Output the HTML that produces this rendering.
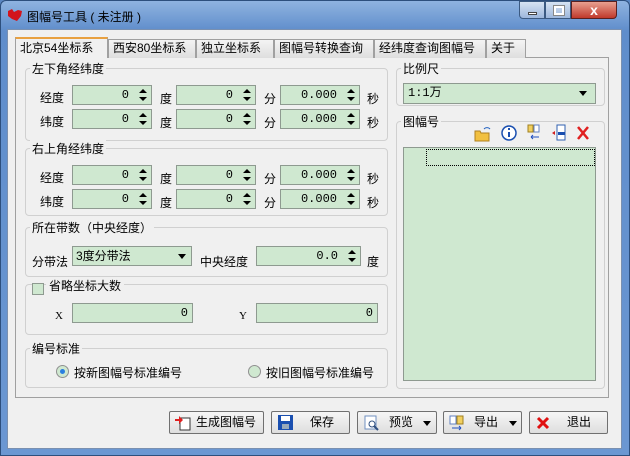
<!DOCTYPE html><html><head><meta charset="utf-8"><style>
*{box-sizing:border-box;margin:0;padding:0}
body{width:630px;height:456px;overflow:hidden;font-family:"Liberation Sans","Noto Sans CJK SC",sans-serif;font-size:12px;color:#000;background:#5a86c2;position:relative}
.a{position:absolute}
#win{left:0;top:0;width:630px;height:456px;background:linear-gradient(#8fb3e0,#5f8dcb 30px,#6b97d2);border:1px solid #2d4f7d;border-radius:6px 6px 0 0}
#client{left:7px;top:29px;width:615px;height:420px;background:#f0f0f0;border:1px solid #7a90b0}
.g{position:absolute;border:1px solid #d0d0d0;border-radius:4px}
.gl{position:absolute;background:#f0f0f0;padding:0 2px;top:-9px;left:4px;font-size:12px}
.in{position:absolute;background:#cfe8d0;border:1px solid #8e9a90;height:20px;text-align:right;padding-right:22px;line-height:18px;font-family:"Liberation Mono",monospace;font-size:12px}
.in.n{padding-right:4px}
.sp{position:absolute;right:3px;top:2px;width:10px;height:14px}
.t{position:absolute;font-size:12px}
.btn{position:absolute;top:411px;height:23px;border:1px solid #707070;border-radius:2px;background:linear-gradient(#f6f6f6,#dedede);font-size:12px;line-height:21px}
.tab{position:absolute;top:39px;height:19px;border:1px solid #a0a0a0;border-bottom:none;background:linear-gradient(#f4f4f4,#dedede);font-size:12px;line-height:17px;padding-left:4px}
</style></head><body>
<div id="win" class="a"></div>
<svg class="a" style="left:6px;top:7px" width="18" height="16"><path d="M2 4 L6 2 L8 5 L12 3 L16 4 L15 9 L11 14 L6 12 L2 9Z" fill="#d2141c"/></svg>
<div class="a" style="left:27px;top:8px;font-size:12px">图幅号工具 ( 未注册 )</div>
<div class="a" style="left:519px;top:1px;width:26px;height:18px;border:1px solid #3b5a82;border-radius:0 0 0 4px;background:linear-gradient(#d6e3f3,#9db7dc)"><div class="a" style="left:8px;top:10px;width:9px;height:3px;background:#fff;border:1px solid #444"></div></div>
<div class="a" style="left:545px;top:1px;width:26px;height:18px;border:1px solid #3b5a82;background:linear-gradient(#d6e3f3,#9db7dc)"><div class="a" style="left:8px;top:4px;width:10px;height:9px;border:2px solid #fff;outline:1px solid #888"></div></div>
<div class="a" style="left:571px;top:1px;width:46px;height:18px;border:1px solid #5a2020;border-radius:0 0 4px 0;background:linear-gradient(#e8a090,#c0392b);color:#fff;font-weight:bold;text-align:center;line-height:16px;font-size:14px">x</div>
<div id="client" class="a"></div>
<div class="a" style="left:15px;top:57px;width:594px;height:341px;border:1px solid #a0a0a0;background:#f0f0f0"></div>
<div class="tab" style="left:108px;width:88px">西安80坐标系</div>
<div class="tab" style="left:196px;width:78px">独立坐标系</div>
<div class="tab" style="left:274px;width:100px">图幅号转换查询</div>
<div class="tab" style="left:374px;width:112px">经纬度查询图幅号</div>
<div class="tab" style="left:486px;width:40px">关于</div>
<div class="tab" style="left:15px;top:37px;height:21px;width:93px;background:#f0f0f0;border-top:2px solid #e8a040;line-height:19px">北京54坐标系</div>

<div class="g" style="left:25px;top:68px;width:363px;height:73px"><span class="gl">左下角经纬度</span></div>
<div class="g" style="left:25px;top:148px;width:363px;height:68px"><span class="gl">右上角经纬度</span></div>
<div class="g" style="left:25px;top:227px;width:363px;height:50px"><span class="gl">所在带数（中央经度）</span></div>
<div class="g" style="left:25px;top:284px;width:363px;height:51px"></div>
<div class="g" style="left:25px;top:348px;width:363px;height:40px"><span class="gl">编号标准</span></div>
<div class="g" style="left:396px;top:68px;width:209px;height:38px"><span class="gl">比例尺</span></div>
<div class="g" style="left:396px;top:121px;width:209px;height:268px"><span class="gl">图幅号</span></div>

<div id="rows"></div>
<script>
var h='';
[[85,'经度'],[109,'纬度'],[165,'经度'],[189,'纬度']].forEach(function(r){
var y=r[0];
h+='<div class="t" style="left:40px;top:'+(y+4)+'px">'+r[1]+'</div>';
[[72,'0'],[176,'0'],[280,'0.000']].forEach(function(c){
h+='<div class="in" style="left:'+c[0]+'px;top:'+y+'px;width:80px">'+c[1]+'<svg class="sp" viewBox="0 0 10 14"><path d="M1 5L5 1L9 5Z M1 9L5 13L9 9Z" fill="#000"/></svg></div>';});
h+='<div class="t" style="left:160px;top:'+(y+5)+'px">度</div><div class="t" style="left:264px;top:'+(y+5)+'px">分</div><div class="t" style="left:367px;top:'+(y+5)+'px">秒</div>';
});
document.getElementById('rows').innerHTML=h;
</script>
<div class="t" style="left:32px;top:253px">分带法</div>
<div class="in" style="left:72px;top:246px;width:120px;text-align:left;padding-left:3px;font-family:'Liberation Sans','Noto Sans CJK SC',sans-serif;font-size:12px">3度分带法<svg class="a" style="right:5px;top:7px" width="8" height="5"><path d="M0 0H8L4 5Z"/></svg></div>
<div class="t" style="left:200px;top:253px">中央经度</div>
<div class="in" style="left:256px;top:246px;width:105px">0.0<svg class="sp" viewBox="0 0 10 14"><path d="M1 5L5 1L9 5Z M1 9L5 13L9 9Z"/></svg></div>
<div class="t" style="left:367px;top:253px">度</div>
<div class="a" style="left:32px;top:283px;width:12px;height:12px;border:1px solid #8e9a90;background:#cfe8d0"></div>
<div class="a" style="left:46px;top:277px;background:#f0f0f0;padding:0 3px;font-size:12px">省略坐标大数</div>
<div class="t" style="left:55px;top:310px;font-family:'Liberation Serif',serif;font-size:11px">X</div>
<div class="in n" style="left:72px;top:303px;width:121px">0</div>
<div class="t" style="left:239px;top:310px;font-family:'Liberation Serif',serif;font-size:11px">Y</div>
<div class="in n" style="left:256px;top:303px;width:122px">0</div>
<div class="a" style="left:56px;top:365px;width:13px;height:13px;border-radius:50%;border:1px solid #909090;background:#cfe8d0"><div class="a" style="left:3px;top:3px;width:5px;height:5px;border-radius:50%;background:#2a7fe0"></div></div>
<div class="t" style="left:74px;top:364px">按新图幅号标准编号</div>
<div class="a" style="left:248px;top:365px;width:13px;height:13px;border-radius:50%;border:1px solid #909090;background:#cfe8d0"></div>
<div class="t" style="left:266px;top:364px">按旧图幅号标准编号</div>

<div class="in" style="left:403px;top:83px;width:193px;height:21px;text-align:left;padding-left:4px">1:1万<svg class="a" style="right:8px;top:7px" width="8" height="5"><path d="M0 0H8L4 5Z"/></svg></div>
<svg class="a" style="left:474px;top:124px" width="130" height="18">
<path d="M1 7h5l1 2h8v8H1z" fill="#f2c040" stroke="#b08020"/><path d="M10 5a4 4 0 0 1 6 0" stroke="#2060c0" fill="none"/>
<circle cx="35" cy="9" r="7" fill="#fff" stroke="#1a4fb0" stroke-width="1.5"/><rect x="34" y="8" width="2" height="5" fill="#1a4fb0"/><rect x="34" y="4" width="2" height="2" fill="#1a4fb0"/>
<rect x="54" y="1" width="5" height="7" fill="#f2d060" stroke="#a08020"/><rect x="60" y="1" width="5" height="7" fill="#fff" stroke="#6080c0"/><path d="M57 13h8M57 13l2-2M57 13l2 2" stroke="#2050c0"/>
<rect x="83" y="1" width="8" height="15" fill="#fff" stroke="#3060b0"/><rect x="84" y="8" width="7" height="3" fill="#1a4fb0"/><path d="M78 9l3-2v4z" fill="#d02020"/>
<path d="M104 3l10 12M114 3l-10 12" stroke="#e02020" stroke-width="2.5"/></svg>
<div class="a" style="left:403px;top:147px;width:193px;height:234px;background:#cfe8d0;border:1px solid #8e9a90"><div class="a" style="left:22px;top:1px;width:169px;height:17px;border:1px dotted #000"></div></div>

<div class="btn" style="left:169px;width:95px;padding-left:26px">生成图幅号<svg class="a" style="left:5px;top:3px" width="16" height="16"><rect x="5" y="3" width="10" height="12" fill="#fff" stroke="#333"/><path d="M0 4h4V1l4 4-4 4V6H0z" fill="#e02020"/></svg></div>
<div class="btn" style="left:271px;width:79px;padding-left:38px">保存<svg class="a" style="left:6px;top:3px" width="15" height="15"><rect width="15" height="15" fill="#1a4fb0"/><rect x="3" y="1" width="9" height="5" fill="#fff"/><rect x="4" y="9" width="7" height="5" fill="#9ab"/></svg></div>
<div class="btn" style="left:357px;width:80px;padding-left:31px">预览<svg class="a" style="left:6px;top:3px" width="16" height="16"><rect x="1" y="1" width="11" height="13" fill="#fff" stroke="#7090c0"/><circle cx="8" cy="9" r="3" fill="none" stroke="#305080"/><path d="M10 11l4 4" stroke="#305080" stroke-width="2"/></svg><svg class="a" style="left:65px;top:9px" width="8" height="5"><path d="M0 0H8L4 5Z"/></svg></div>
<div class="btn" style="left:443px;width:79px;padding-left:30px">导出<svg class="a" style="left:5px;top:3px" width="17" height="16"><rect x="1" y="1" width="6" height="8" fill="#fff" stroke="#6080c0"/><rect x="8" y="1" width="6" height="8" fill="#f2d060" stroke="#a08020"/><path d="M3 13h9M12 13l-2-2M12 13l-2 2" stroke="#2050c0"/></svg><svg class="a" style="left:65px;top:9px" width="8" height="5"><path d="M0 0H8L4 5Z"/></svg></div>
<div class="btn" style="left:529px;width:79px;padding-left:37px">退出<svg class="a" style="left:6px;top:4px" width="14" height="14"><path d="M2 2l10 10M12 2L2 12" stroke="#e01010" stroke-width="3"/></svg></div>
</body></html>
